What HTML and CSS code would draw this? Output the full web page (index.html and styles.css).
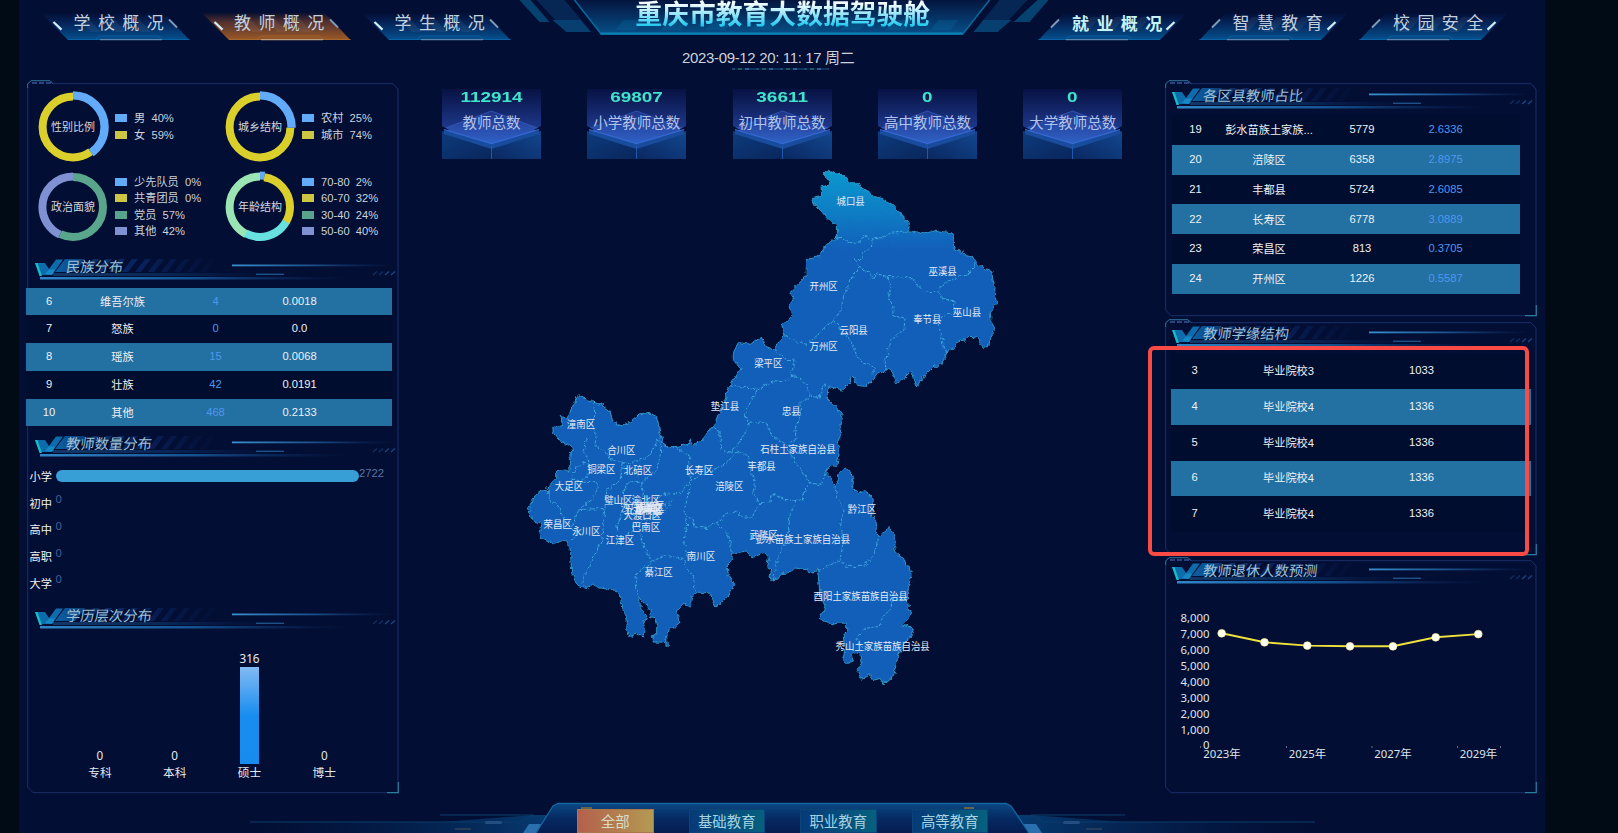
FILE: index.html
```html
<!DOCTYPE html>
<html lang="zh-CN">
<head>
<meta charset="utf-8">
<title>重庆市教育大数据驾驶舱</title>
<link rel="stylesheet" href="styles.css">
</head>
<body>
<svg class="defs" width="0" height="0" aria-hidden="true">
  <defs>
    <linearGradient id="tabBlue" x1="0" y1="0" x2="0" y2="1"><stop offset="0" stop-color="#04296a" stop-opacity="0"/><stop offset=".5" stop-color="#05346f" stop-opacity=".8"/><stop offset="1" stop-color="#06528f"/></linearGradient>
    <linearGradient id="tabOrange" x1="0" y1="0" x2="0" y2="1"><stop offset="0" stop-color="#5a2f2a" stop-opacity="0"/><stop offset=".35" stop-color="#5a352f" stop-opacity=".9"/><stop offset="1" stop-color="#9c5a26"/></linearGradient>
    <linearGradient id="hdBase" x1="0" x2="1"><stop offset="0" stop-color="#3186c8"/><stop offset=".5" stop-color="#15508f"/><stop offset="1" stop-color="#0a2a66" stop-opacity="0"/></linearGradient>
    <linearGradient id="hdLine" x1="0" x2="1"><stop offset="0" stop-color="#3a90d0"/><stop offset=".5" stop-color="#1b4f8a"/><stop offset="1" stop-color="#10306c" stop-opacity="0"/></linearGradient>
    <linearGradient id="hdStripe" gradientUnits="userSpaceOnUse" x1="25" y1="0" x2="190" y2="0"><stop offset="0" stop-color="#0d5c9e"/><stop offset=".2" stop-color="#0a3068"/><stop offset=".5" stop-color="#09205a"/><stop offset="1" stop-color="#081a4c" stop-opacity="0"/></linearGradient>
    <linearGradient id="cardTop" x1="0" y1="0" x2="0" y2="1"><stop offset="0" stop-color="#071243"/><stop offset=".6" stop-color="#1c3585"/><stop offset="1" stop-color="#2a50ae"/></linearGradient>
    <linearGradient id="cardFace" x1="0" y1="0" x2="0" y2="1"><stop offset="0" stop-color="#2843a0" stop-opacity=".5"/><stop offset="1" stop-color="#2f62c6"/></linearGradient>
    <linearGradient id="cardL" x1="0" y1="0" x2="1" y2="1"><stop offset="0" stop-color="#0d3b7c"/><stop offset="1" stop-color="#09265c"/></linearGradient>
    <linearGradient id="cardR" x1="1" y1="0" x2="0" y2="1"><stop offset="0" stop-color="#12478f"/><stop offset="1" stop-color="#0a2861"/></linearGradient>
    <linearGradient id="titleBg" x1="0" y1="0" x2="0" y2="1"><stop offset="0" stop-color="#04153f"/><stop offset="1" stop-color="#065089"/></linearGradient>
    <linearGradient id="mapFill" gradientUnits="userSpaceOnUse" x1="0" y1="30" x2="0" y2="260"><stop offset="0" stop-color="#0b98ce"/><stop offset=".55" stop-color="#0e7cc4"/><stop offset="1" stop-color="#125fba"/></linearGradient>
    <linearGradient id="footBg" x1="0" y1="0" x2="0" y2="1"><stop offset="0" stop-color="#0a4783"/><stop offset=".5" stop-color="#062a63"/><stop offset="1" stop-color="#051d50"/></linearGradient>
    <linearGradient id="wingL" x1="0" x2="1"><stop offset="0" stop-color="#052150" stop-opacity="0"/><stop offset="1" stop-color="#063a70"/></linearGradient>
    <linearGradient id="wingR" x1="1" x2="0"><stop offset="0" stop-color="#052150" stop-opacity="0"/><stop offset="1" stop-color="#063a70"/></linearGradient>
    <filter id="coast" x="-2%" y="-2%" width="104%" height="104%" color-interpolation-filters="sRGB"><feTurbulence type="fractalNoise" baseFrequency=".07" numOctaves="2" seed="4" result="n"/><feDisplacementMap in="SourceGraphic" in2="n" scale="16" xChannelSelector="R" yChannelSelector="G"/></filter>

    <symbol id="tab" viewBox="0 0 154 32" overflow="visible">
      <path d="M0 2H123L149.500 30H28Z" fill="var(--tab)"/>
      <path d="M37 7h10l14 15h-10zM62 7h10l14 15h-10zM87 7h10l14 15h-10z" fill="#fff" opacity=".06"/>
      <path d="M28 29.500H149.500" stroke="var(--edge)" stroke-width="1"/>
      <path d="M56 29l4-3h58l4 3" fill="none" stroke="var(--edge)" stroke-width=".8"/>
      <path d="M60 29.600H122" stroke="var(--glow)" stroke-width="1.200"/>
      <path d="M13.500 12L21.500 19.600" stroke="#d6ecf5" stroke-width="2.200"/>
      <path d="M129 9.500L137 17.500" stroke="#7f9db8" stroke-width="1.800"/>
    </symbol>

    <symbol id="heading" viewBox="0 0 362 21" overflow="visible">
      <path d="M30 0h20l-10 13H20zM58 0h6L54 13h-6zM71 0h6L67 13h-6zM84 0h6L80 13h-6zM97 0h6L93 13h-6zM110 0h6l-10 13h-6zM123 0h6l-10 13h-6zM136 0h6l-10 13h-6zM149 0h6l-10 13h-6zM162 0h6l-10 13h-6zM175 0h6l-10 13h-6z" fill="url(#hdStripe)"/>
      <path d="M0 4H10L14 10L21 .5H28L17 16H5Z" fill="#0d6cac"/>
      <path d="M10 15L14 10.500H20L17 16Z" fill="#1787c6"/>
      <path d="M0 4H2.500L7 17H4.500Z" fill="#17bcc8"/>
      <rect x="18" y="14" width="230" height="3" fill="url(#hdBase)" opacity=".35"/>
      <rect x="5" y="18" width="310" height="2.500" fill="url(#hdBase)"/>
      <rect x="197" y="5.500" width="162" height="1.800" fill="url(#hdLine)"/>
      <rect x="221" y="14.600" width="28" height="1.400" fill="#1c5288"/>
      <path d="M338 16l4-3.500M344 16l4-3.500" stroke="#122f64" stroke-width="1.300"/>
      <path d="M350 16l4-3.500M356 16l4-3.500" stroke="#1a4680" stroke-width="1.400"/>
    </symbol>

    <symbol id="card" viewBox="0 0 99 70" preserveAspectRatio="none">
      <path d="M0 0H99V43L49.500 60L0 43Z" fill="url(#cardTop)"/>
      <path d="M1 40L49.500 22L98 40L49.500 55Z" fill="url(#cardFace)" stroke="#3a62c8" stroke-opacity=".65" stroke-width="1"/>
      <path d="M0 37V45L7 41ZM99 37V45L92 41Z" fill="#020c30"/>
      <path d="M0 42L49.500 56V70H0Z" fill="url(#cardL)"/>
      <path d="M99 42L49.500 56V70H99Z" fill="url(#cardR)"/>
      <path d="M2 41L49.500 54.500L97 41V45L49.500 60L2 45Z" fill="#1a4c9e"/>
      <path d="M2 40.500L49.500 54.500L97 40.500" fill="none" stroke="#3569d4" stroke-width="1.200"/>
      <path d="M49.500 56V70" stroke="#1f58ac" stroke-width="1"/>
    </symbol>
  </defs>
</svg>

<div class="screen">
  <header class="header">
    <nav class="nav">
      <a class="tab"><svg class="tab-bg" width="154" height="32"><use href="#tab"/></svg><span>学校概况</span></a>
      <a class="tab tab-active"><svg class="tab-bg" width="154" height="32"><use href="#tab"/></svg><span>教师概况</span></a>
      <a class="tab"><svg class="tab-bg" width="154" height="32"><use href="#tab"/></svg><span>学生概况</span></a>
    </nav>
    <div class="brand">
      <svg class="brand-bg" viewBox="522.5 0 511.5 36" width="511.500" height="36">
        <path d="M519 0h11l19 22h-10z" fill="#06426f"/><path d="M1037 0h11l-19 22h-16z" fill="#06426f"/>
        <path d="M536 0h28l27 32h-25z" fill="#062653"/><path d="M1027 0h-28l-26 32h24z" fill="#062653"/>
        <path d="M552 20h28l10 12h-24z" fill="#074070"/><path d="M1011 20h-28l-10 12h24z" fill="#074070"/>
        <path d="M574 0H989L962 34.500H601Z" fill="url(#titleBg)"/>
        <path d="M615 30l8-10h20l-8 10zM660 30l8-10h20l-8 10zM705 30l8-10h20l-8 10zM750 30l8-10h20l-8 10zM795 30l8-10h20l-8 10zM840 30l8-10h20l-8 10zM885 30l8-10h20l-8 10zM930 30l8-10h20l-8 10z" fill="#0a6aa0" opacity=".3"/>
        <path d="M574 0L601 34.500" stroke="#086a9c" stroke-width="1.500"/><path d="M989 0L962 34.500" stroke="#086a9c" stroke-width="1.500"/>
        <path d="M600 33.600H962" stroke="#0a84b6" stroke-width="2.400"/>
      </svg>
      <h1 class="title">重庆市教育大数据驾驶舱</h1>
      <time class="clock">2023-09-12 20: 11: 17 周二</time>
      <i class="clock-line"></i>
    </div>
    <nav class="nav nav-right">
      <a class="tab tab-bold"><svg class="tab-bg" width="154" height="32"><use href="#tab"/></svg><span>就业概况</span></a>
      <a class="tab"><svg class="tab-bg" width="154" height="32"><use href="#tab"/></svg><span>智慧教育</span></a>
      <a class="tab"><svg class="tab-bg" width="154" height="32"><use href="#tab"/></svg><span>校园安全</span></a>
    </nav>
  </header>

  <main class="main">
    <section class="panel panel-left">
      <svg class="frame" viewBox="0 0 372 714" width="372" height="714">
        <path d="M.7 4V707L6 712.700H371V9L366 3.700H26L23 .7H4L.7 4" fill="none" stroke="#1b2f6b"/>
        <path d="M.7 8V4L4 .7H23L26 3.700" fill="none" stroke="#2b6f90"/><path d="M5 3h5m2 0h5m2 0h5" stroke="#3a549c" stroke-width="1.500"/>
        <path d="M360 712.700H371.300V702" fill="none" stroke="#2a7c9c" stroke-width="1.200"/>
      </svg>
      <div class="donuts">
        <div class="donut">
          <svg viewBox="-37 -37 74 74" width="74" height="74"><g transform="rotate(-90)" fill="none" stroke-width="8"><circle r="30.400" stroke="#dbd02b" pathLength="100" stroke-dasharray="59.800 100" stroke-dashoffset="-40.200"/><circle r="31.600" stroke="#62abfb" stroke-width="8.400" pathLength="100" stroke-dasharray="40.300 100"/></g></svg>
          <b>性别比例</b>
          <ul><li><i class="c-blue"></i>男&nbsp; 40%</li><li><i class="c-yellow"></i>女&nbsp; 59%</li></ul>
        </div>
        <div class="donut">
          <svg viewBox="-37 -37 74 74" width="74" height="74"><g transform="rotate(-90)" fill="none" stroke-width="8"><circle r="30.400" stroke="#dbd02b" pathLength="100" stroke-dasharray="74.700 100" stroke-dashoffset="-25.300"/><circle r="31.600" stroke="#62abfb" stroke-width="8.400" pathLength="100" stroke-dasharray="25.400 100"/></g></svg>
          <b>城乡结构</b>
          <ul><li><i class="c-blue"></i>农村&nbsp; 25%</li><li><i class="c-yellow"></i>城市&nbsp; 74%</li></ul>
        </div>
        <div class="donut">
          <svg viewBox="-37 -37 74 74" width="74" height="74"><g transform="rotate(-90)" fill="none" stroke-width="8"><circle r="30" stroke="#5aa68c" pathLength="100" stroke-dasharray="57 100"/><circle r="30.600" stroke="#7f91d2" pathLength="100" stroke-dasharray="43 100" stroke-dashoffset="-57"/></g></svg>
          <b>政治面貌</b>
          <ul><li><i class="c-blue"></i>少先队员&nbsp; 0%</li><li><i class="c-yellow"></i>共青团员&nbsp; 0%</li><li><i class="c-green"></i>党员&nbsp; 57%</li><li><i class="c-purple"></i>其他&nbsp; 42%</li></ul>
        </div>
        <div class="donut">
          <svg viewBox="-37 -37 74 74" width="74" height="74"><g transform="rotate(-90)" fill="none" stroke-width="8"><circle r="30.400" stroke="#9be5b4" pathLength="100" stroke-dasharray="42.500 100" stroke-dashoffset="-57.500"/><circle r="30" stroke="#68e0e0" pathLength="100" stroke-dasharray="25 100" stroke-dashoffset="-33"/><circle r="30" stroke="#dbd02b" pathLength="100" stroke-dasharray="31 100" stroke-dashoffset="-2.200"/><circle r="31.500" stroke="#62abfb" pathLength="100" stroke-dasharray="2.300 100"/></g></svg>
          <b>年龄结构</b>
          <ul><li><i class="c-blue"></i>70-80&nbsp; 2%</li><li><i class="c-yellow"></i>60-70&nbsp; 32%</li><li><i class="c-green"></i>30-40&nbsp; 24%</li><li><i class="c-purple"></i>50-60&nbsp; 40%</li></ul>
        </div>
      </div>

      <h2 class="heading"><svg width="362" height="21"><use href="#heading"/></svg><span>民族分布</span></h2>
      <div class="table table-ethnic">
        <div class="row band"><span>6</span><span>维吾尔族</span><span class="num">4</span><span>0.0018</span></div>
        <div class="row"><span>7</span><span>怒族</span><span class="num">0</span><span>0.0</span></div>
        <div class="row band"><span>8</span><span>瑶族</span><span class="num">15</span><span>0.0068</span></div>
        <div class="row"><span>9</span><span>壮族</span><span class="num">42</span><span>0.0191</span></div>
        <div class="row band"><span>10</span><span>其他</span><span class="num">468</span><span>0.2133</span></div>
      </div>

      <h2 class="heading heading-count"><svg width="362" height="21"><use href="#heading"/></svg><span>教师数量分布</span></h2>
      <div class="hbars">
        <div class="hbar"><label>小学</label><i class="fill"></i><em>2722</em></div>
        <div class="hbar"><label>初中</label><em class="zero">0</em></div>
        <div class="hbar"><label>高中</label><em class="zero">0</em></div>
        <div class="hbar"><label>高职</label><em class="zero">0</em></div>
        <div class="hbar"><label>大学</label><em class="zero">0</em></div>
      </div>

      <h2 class="heading heading-degree"><svg width="362" height="21"><use href="#heading"/></svg><span>学历层次分布</span></h2>
      <div class="columns">
        <div class="column"><em>0</em><i style="height:0"></i><label>专科</label></div>
        <div class="column"><em>0</em><i style="height:0"></i><label>本科</label></div>
        <div class="column"><em>316</em><i style="height:97px"></i><label>硕士</label></div>
        <div class="column"><em>0</em><i style="height:0"></i><label>博士</label></div>
      </div>
    </section>

    <section class="center">
      <div class="stats">
        <div class="stat"><svg width="99" height="70"><use href="#card"/></svg><b>112914</b><span>教师总数</span></div>
        <div class="stat"><svg width="99" height="70"><use href="#card"/></svg><b>69807</b><span>小学教师总数</span></div>
        <div class="stat"><svg width="99" height="70"><use href="#card"/></svg><b>36611</b><span>初中教师总数</span></div>
        <div class="stat"><svg width="99" height="70"><use href="#card"/></svg><b>0</b><span>高中教师总数</span></div>
        <div class="stat"><svg width="99" height="70"><use href="#card"/></svg><b>0</b><span>大学教师总数</span></div>
      </div>
      <svg class="map" viewBox="0 0 1500 1568" preserveAspectRatio="none" width="500" height="540">
        <g filter="url(#coast)">
          <path class="land" d="M940 38L955 30L985 38L1000 48L1025 66L1048 66L1052 80L1078 92L1085 105L1110 108L1128 118L1150 132L1165 148L1178 160L1180 172L1198 182L1196 208L1225 212L1245 207L1262 210L1278 204L1298 208L1328 212L1334 245L1330 265L1358 267L1370 278L1385 280L1393 292L1412 305L1430 320L1446 325L1448 345L1455 370L1453 395L1462 415L1450 430L1441 440L1443 465L1453 480L1447 505L1440 525L1425 548L1412 535L1405 515L1380 512L1365 522L1345 528L1330 545L1310 558L1306 575L1285 600L1272 598L1250 620L1235 635L1222 660L1212 635L1205 612L1185 630L1160 647L1148 625L1142 605L1125 612L1100 625L1088 640L1070 658L1045 655L1030 630L1020 628L1018 650L998 668L975 662L955 658L950 690L965 705L980 720L998 745L990 765L995 790L985 815L988 850L980 890L960 888L948 905L962 925L975 945L985 935L982 915L1003 893L1022 903L1030 935L1028 955L1045 968L1060 960L1080 972L1090 985L1088 1010L1085 1035L1100 1055L1098 1080L1108 1090L1125 1080L1135 1068L1150 1080L1155 1110L1155 1135L1180 1155L1190 1180L1210 1195L1200 1215L1195 1245L1192 1275L1195 1300L1205 1315L1190 1335L1175 1350L1195 1355L1210 1360L1200 1390L1185 1400L1165 1440L1155 1480L1148 1500L1120 1522L1110 1505L1090 1510L1080 1495L1055 1508L1042 1480L1055 1470L1050 1440L1035 1430L1025 1440L1030 1455L1010 1462L998 1450L1005 1420L1000 1385L1010 1365L1010 1345L985 1345L965 1350L930 1332L945 1295L930 1265L925 1210L920 1185L910 1200L890 1190L855 1185L830 1200L810 1203L790 1225L780 1210L785 1190L770 1180L775 1155L760 1140L740 1150L725 1155L710 1135L685 1140L668 1142L665 1160L652 1180L655 1205L672 1230L660 1260L635 1285L615 1298L605 1275L600 1258L565 1255L545 1270L540 1300L525 1290L500 1305L505 1330L510 1345L495 1358L480 1362L470 1380L472 1413L455 1400L430 1400L425 1385L440 1380L440 1350L435 1330L420 1325L420 1305L400 1285L385 1265L388 1290L397 1305L410 1325L400 1345L408 1368L400 1385L380 1375L360 1385L350 1360L352 1340L345 1315L335 1300L332 1270L320 1250L270 1243L250 1230L230 1245L200 1232L185 1200L182 1150L172 1110L150 1105L130 1115L95 1100L88 1075L95 1055L65 1045L55 1010L75 975L95 960L115 965L120 945L140 925L140 905L165 900L180 905L178 870L188 845L182 830L155 820L130 790L128 780L160 770L150 745L175 750L185 720L205 682L225 692L245 702L270 708L300 730L310 760L330 772L360 760L385 740L420 735L440 745L450 790L465 832L500 832L535 825L540 812L550 828L570 820L590 795L615 765L640 705L660 655L690 605L670 580L670 560L685 530L720 535L745 520L755 515L765 540L790 550L825 510L815 480L850 450L835 430L850 400L840 385L880 345L888 335L890 288L930 280L945 250L965 235L982 225L982 190L960 180L935 150L915 130L907 112L935 105L933 78L960 72L950 50Z"/>
          <g class="border">
            <path d="M982 225L1015 240L1050 238L1060 220L1085 230L1120 225L1140 213L1196 208"/>
            <path d="M1085 230L1088 250L1060 270L1055 288L1035 290L1045 310L1075 325L1085 342L1100 330L1130 338L1205 342L1225 365L1240 382L1285 382L1300 360L1330 345L1380 330L1390 310L1393 292"/>
            <path d="M1045 318L1020 350L1000 400L990 440L970 465L940 490L910 520L890 535L860 528L825 510"/>
            <path d="M970 465L990 490L1015 515L1030 545L1040 570L1060 590L1090 600L1088 625"/>
            <path d="M1130 338L1142 370L1135 400L1148 420L1150 450L1185 460L1182 490L1160 510L1138 525L1135 560L1125 580L1128 610"/>
            <path d="M1285 382L1300 405L1335 412L1330 445L1295 455L1285 480L1295 510L1300 545L1308 560"/>
            <path d="M790 550L815 565L828 580L855 578L852 600L838 612L845 628L870 632L890 655L900 685L870 705L872 740L855 780L858 810L830 830"/>
            <path d="M660 655L700 660L740 668L765 655L790 640L820 645L845 628"/>
            <path d="M740 670L715 715L705 740L718 765L700 800L680 835L655 850L635 840L628 790L612 768"/>
            <path d="M718 765L750 758L775 770L785 800L830 830L850 870L880 905L898 935L930 945L948 905"/>
            <path d="M900 685L925 690L945 650L955 658"/>
            <path d="M680 845L715 860L722 900L735 940L728 970L750 995L735 1020L725 1040L700 1035L680 1022L650 1025L625 1050L590 1070L555 1065L545 1040L530 1035"/>
            <path d="M750 995L780 990L790 970L820 985L858 990L880 985L885 960L898 935"/>
            <path d="M858 990L840 1030L835 1080L820 1120L805 1150L795 1190L790 1225"/>
            <path d="M975 945L980 985L1000 1010L992 1060L1000 1110L990 1160L1010 1180L1060 1180L1090 1150L1105 1100"/>
            <path d="M990 1160L960 1175L920 1195"/>
            <path d="M1192 1275L1150 1280L1140 1305L1120 1325L1105 1355L1065 1360L1040 1390L1060 1420"/>
            <path d="M500 832L520 850L540 860L535 900L545 930L535 970L525 1010L530 1060L522 1110L535 1160"/>
            <path d="M680 845L650 880L610 900L580 915L545 930"/>
            <path d="M250 702L255 740L245 770L258 800L255 830L290 850L300 870L340 880L380 875L415 860L440 820L450 800"/>
            <path d="M450 800L452 850L440 900L400 935L350 938L340 970L345 1010L320 1060L325 1080"/>
            <path d="M230 810L220 840L235 870L240 900L220 930L180 930L200 890L225 880"/>
            <path d="M340 880L330 930L290 960L285 1010L280 1060L275 1110L240 1170L215 1232"/>
            <path d="M110 950L120 990L145 1005L160 1040L185 1070L205 1015L280 1012"/>
            <path d="M185 1070L200 1090L180 1110"/><path d="M180 930L260 935L265 950L245 990L205 1015"/>
            <path d="M395 940L400 970L390 1010L405 1040L385 1060L395 1100L415 1150L425 1165L380 1200L375 1235L385 1265"/>
            <path d="M425 1165L470 1148L520 1160L530 1190L550 1210L555 1250"/>
            <path d="M435 980L470 970L510 968L540 932"/><path d="M350 1010L380 1040L365 1080L345 1090M420 1010L460 1000L490 990M400 1045L440 1040L480 1000"/>
            <path d="M620 1055L655 1085L662 1120L668 1142"/>
          </g>
        </g>
        <g class="labels">
          <text x="1022" y="131">城口县</text><text x="1298" y="333">巫溪县</text><text x="941" y="378">开州区</text><text x="1371" y="452">巫山县</text><text x="1252" y="472">奉节县</text><text x="1031" y="505">云阳县</text><text x="941" y="551">万州区</text><text x="775" y="600">梁平区</text><text x="645" y="727">垫江县</text><text x="844" y="741">忠县</text><text x="213" y="779">潼南区</text><text x="334" y="853">合川区</text><text x="864" y="850">石柱土家族自治县</text><text x="274" y="909">铜梁区</text><text x="384" y="913">北碚区</text><text x="567" y="912">长寿区</text><text x="755" y="899">丰都县</text><text x="658" y="959">涪陵区</text><text x="177" y="959">大足区</text><text x="325" y="999">璧山区</text><text x="408" y="998">渝北区</text><text x="389" y="1018">沙坪坝区</text><text x="420" y="1016">江北区</text><text x="415" y="1024">渝中区</text><text x="420" y="1022">南岸区</text><text x="400" y="1028">九龙坡区</text><text x="397" y="1041">大渡口区</text><text x="1056" y="1024">黔江区</text><text x="143" y="1070">荣昌区</text><text x="408" y="1078">巴南区</text><text x="229" y="1089">永川区</text><text x="330" y="1114">江津区</text><text x="761" y="1100">武隆区</text><text x="879" y="1111">彭水苗族土家族自治县</text><text x="573" y="1161">南川区</text><text x="446" y="1209">綦江区</text><text x="1052" y="1278">酉阳土家族苗族自治县</text><text x="1118" y="1424">秀山土家族苗族自治县</text>
        </g>
      </svg>
    </section>

    <div class="right">
      <section class="panel panel-share">
        <svg class="frame" viewBox="0 0 372 238" width="372" height="238">
          <path d="M.7 4V230L6 235.700H371V9L366 3.700H26L23 .7H4L.7 4" fill="none" stroke="#1b2f6b"/>
          <path d="M.7 8V4L4 .7H23L26 3.700" fill="none" stroke="#2b6f90"/><path d="M5 3h5m2 0h5m2 0h5" stroke="#3a549c" stroke-width="1.500"/>
          <path d="M360 235.700H371.300V225" fill="none" stroke="#2a7c9c" stroke-width="1.200"/>
        </svg>
        <h2 class="heading"><svg width="362" height="21"><use href="#heading"/></svg><span>各区县教师占比</span></h2>
        <div class="table table-share">
          <div class="row"><span>19</span><span>彭水苗族土家族...</span><span>5779</span><span class="num">2.6336</span></div>
          <div class="row band"><span>20</span><span>涪陵区</span><span>6358</span><span class="num">2.8975</span></div>
          <div class="row"><span>21</span><span>丰都县</span><span>5724</span><span class="num">2.6085</span></div>
          <div class="row band"><span>22</span><span>长寿区</span><span>6778</span><span class="num">3.0889</span></div>
          <div class="row"><span>23</span><span>荣昌区</span><span>813</span><span class="num">0.3705</span></div>
          <div class="row band"><span>24</span><span>开州区</span><span>1226</span><span class="num">0.5587</span></div>
        </div>
      </section>

      <section class="panel panel-school">
        <svg class="frame" viewBox="0 0 372 238" width="372" height="238">
          <path d="M.7 4V230L6 235.700H371V9L366 3.700H26L23 .7H4L.7 4" fill="none" stroke="#1b2f6b"/>
          <path d="M.7 8V4L4 .7H23L26 3.700" fill="none" stroke="#2b6f90"/><path d="M5 3h5m2 0h5m2 0h5" stroke="#3a549c" stroke-width="1.500"/>
          <path d="M360 235.700H371.300V225" fill="none" stroke="#2a7c9c" stroke-width="1.200"/>
        </svg>
        <h2 class="heading"><svg width="362" height="21"><use href="#heading"/></svg><span>教师学缘结构</span></h2>
        <div class="table table-school">
          <div class="row"><span>3</span><span>毕业院校3</span><span>1033</span></div>
          <div class="row band"><span>4</span><span>毕业院校4</span><span>1336</span></div>
          <div class="row"><span>5</span><span>毕业院校4</span><span>1336</span></div>
          <div class="row band"><span>6</span><span>毕业院校4</span><span>1336</span></div>
          <div class="row"><span>7</span><span>毕业院校4</span><span>1336</span></div>
        </div>
      </section>

      <section class="panel panel-retire">
        <svg class="frame" viewBox="0 0 372 238" width="372" height="238">
          <path d="M.7 4V230L6 235.700H371V9L366 3.700H26L23 .7H4L.7 4" fill="none" stroke="#1b2f6b"/>
          <path d="M.7 8V4L4 .7H23L26 3.700" fill="none" stroke="#2b6f90"/><path d="M5 3h5m2 0h5m2 0h5" stroke="#3a549c" stroke-width="1.500"/>
          <path d="M360 235.700H371.300V225" fill="none" stroke="#2a7c9c" stroke-width="1.200"/>
        </svg>
        <h2 class="heading"><svg width="362" height="21"><use href="#heading"/></svg><span>教师退休人数预测</span></h2>
        <svg class="line-chart" viewBox="1166 600 370 170" width="370" height="170">
          <g text-anchor="end"><text x="1210.500" y="623">8,000</text><text x="1210.500" y="639">7,000</text><text x="1210.500" y="655">6,000</text><text x="1210.500" y="670.700">5,000</text><text x="1210.500" y="686.700">4,000</text><text x="1210.500" y="702.600">3,000</text><text x="1210.500" y="718.500">2,000</text><text x="1210.500" y="734.500">1,000</text><text x="1210.500" y="750.400">0</text></g>
          <g text-anchor="middle"><text x="1223" y="759">2023年</text><text x="1308.500" y="759">2025年</text><text x="1394" y="759">2027年</text><text x="1479.500" y="759">2029年</text></g>
          <path d="M1201 748h1M1287 748h1M1372.500 748h1M1458 748h1M1501 748h1" stroke="#7f8aa5" stroke-width="1.500"/>
          <polyline points="1222.700,634.300 1265.500,643.300 1308.300,646.600 1351,647.300 1394,647.300 1436.700,638.300 1479.300,635.100" fill="none" stroke="#f0e23c" stroke-width="1.900"/>
          <g fill="#fffef2" stroke="#f3e98a" stroke-width=".6"><circle cx="1222.700" cy="634.300" r="3.900"/><circle cx="1265.500" cy="643.300" r="3.900"/><circle cx="1308.300" cy="646.600" r="3.900"/><circle cx="1351" cy="647.300" r="3.900"/><circle cx="1394" cy="647.300" r="3.900"/><circle cx="1436.700" cy="638.300" r="3.900"/><circle cx="1479.300" cy="635.100" r="3.900"/></g>
        </svg>
      </section>
    </div>
  </main>

  <footer class="footer">
    <svg class="footer-bg" viewBox="0 794 1526 39" width="1526" height="39">
      <g transform="translate(-19 0)">
        <path d="M250 822H440L534 815H548L536 833H250Z" fill="url(#wingL)"/><path d="M1315 822H1125L1031 815H1017L1029 833H1315Z" fill="url(#wingR)"/>
        <path d="M250 822H522L530 816H546M440 815H534" fill="none" stroke="#0a3c6c" stroke-width="1"/>
        <path d="M1315 822H1043L1035 816H1019M1125 815H1031" fill="none" stroke="#0a3c6c" stroke-width="1"/>
        <rect x="485" y="821" width="17" height="3" rx="1.500" fill="#244d80"/><rect x="1063" y="821" width="17" height="3" rx="1.500" fill="#244d80"/>
        <path d="M455 829h16M1086 829h16" stroke="#33415c" stroke-width="1.500"/>
        <path d="M523 833L529 824H541L537 833Z" fill="#2a6fae"/><path d="M1042 833L1036 824H1022L1027 833Z" fill="#2a6fae"/>
        <path d="M536 833L553 806L558 803.500H1006L1011 806L1029 833Z" fill="url(#footBg)"/>
        <path d="M536 833L553 806L558 803.500H1006L1011 806L1029 833" fill="none" stroke="#14669e" stroke-width="1.300"/>
        <path d="M560 808.500H1003" stroke="#0b4076"/><path d="M581 808h11M964 808h10" stroke="#86713e" stroke-width="1.500"/>
      </g>
    </svg>
    <button class="stage stage-active">全部</button><button class="stage">基础教育</button><button class="stage">职业教育</button><button class="stage">高等教育</button>
  </footer>
  <div class="marker"></div>
</div>
</body>
</html>
```
FILE: styles.css
```css
* { box-sizing: border-box; margin: 0; padding: 0; }
body {
  width: 1618px; height: 833px; overflow: hidden; background: #000b15;
  font-family: "Liberation Sans", "Noto Sans CJK SC", sans-serif; color: #e6eaf0;
}
i, em { font-style: normal; }
ul { list-style: none; }
svg { display: block; }
.defs { position: absolute; }
.screen {
  position: relative; height: 833px; margin: 0 73px 0 19px; background: #020e33;
  display: grid; grid-template-rows: 80px 714px 39px; overflow: hidden;
}

.header { display: flex; padding-left: 21px; }
.nav { display: flex; padding-top: 10px; }
.tab {
  --tab: url(#tabBlue); --edge: #0a63a6; --glow: #5b86ad;
  position: relative; width: 160.500px; height: 32px; padding-left: 33.500px;
  font-size: 17px; letter-spacing: 7.400px; line-height: 28.500px; color: #c3d0df; white-space: nowrap;
}
.tab-active { --tab: url(#tabOrange); --edge: #a8672c; --glow: #b99e84; }
.tab-bg { position: absolute; left: 0; top: 0; overflow: visible; }
.tab span { position: relative; }
.nav-right .tab { padding-left: 38px; }
.nav-right .tab-bg { transform: scaleX(-1); }
.nav-right .tab-bold { font-weight: 700; color: #c4f3f8; line-height: 30px; }

.brand { position: relative; width: 511.500px; margin-left: 1px; flex: none; display: flex; flex-direction: column; align-items: center; }
.brand-bg { position: absolute; left: 0; top: 0; overflow: visible; }
.title {
  position: relative; margin-left: 9px; height: 34px; line-height: 31px; font-size: 26.800px; font-weight: 700; white-space: nowrap;
  background: linear-gradient(#f2fcff 4px, #8fe4f8 15px, #16c6f0 27px); -webkit-background-clip: text; background-clip: text; color: transparent;
}
.clock { margin-left: -20px; margin-top: 14px; height: 20px; line-height: 20px; font-size: 15px; letter-spacing: -.35px; color: #cdd2dc; white-space: nowrap; }
.clock-line { width: 97px; height: 2px; margin-left: 5px; opacity: .8; background: repeating-linear-gradient(90deg, #24507f 0 3px, #0a2550 3px 6px, #1c6a66 6px 10px, #0a2550 10px 13px, #3d6ca5 13px 17px, #123a63 17px 24px); }

.main { display: grid; grid-template-columns: 372px 766.500px 372px; padding-left: 7.500px; }
.panel { position: relative; }
.frame { position: absolute; left: 0; top: 0; }

.donuts { position: relative; display: grid; grid-template-columns: 187px 185px; grid-template-rows: 80px 80px; padding: 6.500px 0 12.500px; }
.donut { display: flex; align-items: center; padding-left: 9.500px; position: relative; }
.donut b { position: absolute; left: 9.500px; width: 74px; text-align: center; font-size: 11px; font-weight: 400; color: #d3d8e0; line-height: 16px; }
.donut ul { margin-left: 4.500px; font-size: 11.200px; line-height: 16.500px; color: #cbd2dc; white-space: nowrap; }
.donut li { display: flex; align-items: center; height: 16.500px; }
.donut li i { width: 12px; height: 8px; margin-right: 7.500px; }
.c-blue { background: #62abfb; } .c-yellow { background: #cdc642; } .c-green { background: #58a38c; } .c-purple { background: #7f91d2; }

.heading { position: relative; width: 362px; height: 21px; margin-left: 8px; font-weight: 400; }
.heading svg { position: absolute; left: 0; top: 0; overflow: visible; }
.heading span { position: relative; display: block; padding-left: 31px; font-size: 14.300px; line-height: 17px; transform: skewX(-7deg); transform-origin: 0 50%; color: #9cc0d8; white-space: nowrap; }

.table { position: relative; font-size: 11.200px; color: #eef1f4; white-space: nowrap; }
.row { display: grid; align-items: center; text-align: center; background: #010d2f; padding-bottom: 1.500px; }
.band { background: #2370a2; }
.num { color: #4f97ee; }
.table-ethnic { width: 366.500px; margin: 7.500px 0 0 -1px; }
.table-ethnic .row { height: 27.800px; grid-template-columns: 47px 100px 86px 82px; }
.heading-count { margin-top: 9.200px; }
.hbars { position: relative; margin-top: 5.700px; padding-left: 3px; }
.hbar { display: flex; align-items: center; height: 26.800px; font-size: 11.200px; color: #f0f2f5; }
.hbar label { width: 26px; }
.hbar .fill { width: 303.500px; height: 12.500px; border-radius: 6px; background: #389fd6; }
.hbar em { color: #5d74a2; margin-bottom: 5px; }
.hbar .zero { color: #3f6098; font-family: "Noto Sans", sans-serif; margin-bottom: 8px; }
.heading-degree { margin-top: 12px; }
.columns { display: flex; height: 154.300px; padding-left: 36px; align-items: flex-end; font-family: "Noto Sans", "Noto Sans CJK SC", sans-serif; font-size: 11.700px; }
.column { width: 74.800px; display: flex; flex-direction: column; align-items: center; }
.column em { line-height: 17px; }
.column i { width: 19px; background: linear-gradient(#82baf3, #188df0 50%, #188bee); }
.column label { line-height: 17px; height: 20px; }

.stats { display: flex; gap: 46.300px; padding: 9px 0 0 43.500px; }
.stat { position: relative; width: 99px; height: 70px; display: flex; flex-direction: column; align-items: center; }
.stat svg { position: absolute; left: 0; top: 0; }
.stat b { position: relative; line-height: 15px; font-size: 15.500px; color: #42e3cb; transform: scaleX(1.220); }
.stat span { position: relative; margin-top: 8px; line-height: 22px; font-size: 14.500px; color: #b3c4ec; white-space: nowrap; }
.map { margin: 1.300px 0 0 111.500px; }
.land { fill: url(#mapFill); stroke: #3fb4dd; stroke-width: 2.200; }
.border path { fill: none; stroke: #4cc0e6; stroke-width: 2.600; stroke-dasharray: 9 4; stroke-opacity: .85; }
.labels text { font: 28.300px "Noto Sans CJK SC", sans-serif; fill: #e3ebf5; text-anchor: middle; }

.right { display: grid; grid-template-rows: 238px 238.500px 237.500px; }
.right .heading { margin-left: 7px; }
.panel-share { padding-top: 8.200px; }
.panel-school { padding-top: 8px; }
.panel-school .frame, .panel-retire .frame { top: .5px; }
.panel-retire { padding-top: 6.700px; }
.table-share { margin: 6px 0 0 6.500px; width: 348px; }
.table-share .row { height: 29.750px; grid-template-columns: 48px 99px 87px 80px; }
.table-school { margin: 6.300px 0 0 5.500px; width: 360px; }
.table-school .row { height: 35.750px; grid-template-columns: 48px 140px 126px; padding-bottom: 2px; }
.line-chart { margin-top: 15px; position: relative; }
.line-chart text { font: 11.400px "Noto Sans", "Noto Sans CJK SC", sans-serif; fill: #dfe3ea; }

.footer { position: relative; display: flex; gap: 35px; padding: 14.500px 0 0 558px; }
.footer-bg { position: absolute; left: 0; top: 0; }
.stage {
  position: relative; width: 76.500px; height: 24px; border: 1px solid #0b4478; white-space: nowrap;
  background: linear-gradient(90deg, #063a78, #06617f); font: 14.400px/20px "Noto Sans CJK SC", sans-serif; color: #a5d3e4;
}
.stage-active { background: linear-gradient(90deg, #b4604c, #b39a52); border-color: #a8774c; color: #d8dcc8; }
.marker { position: absolute; left: 1129px; top: 346px; width: 381px; height: 210px; border: 4px solid #f94a45; border-radius: 6px; }
```
